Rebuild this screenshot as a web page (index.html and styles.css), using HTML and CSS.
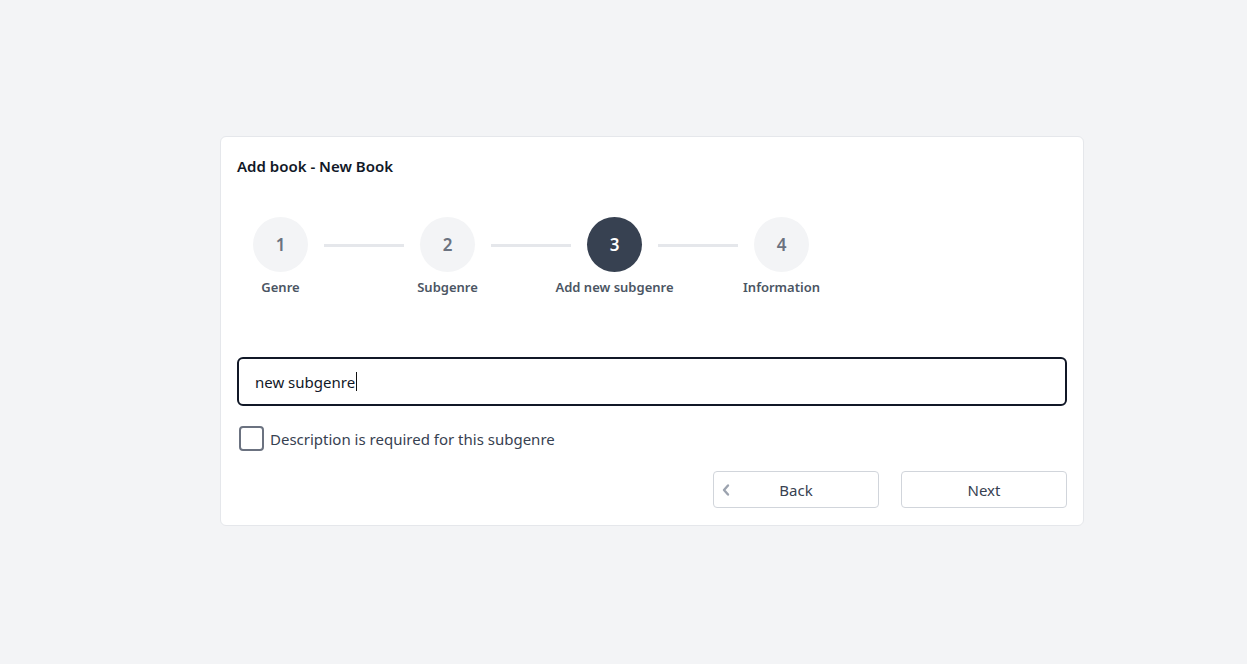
FILE: index.html
```html
<!DOCTYPE html>
<html lang="en">
<head>
<meta charset="utf-8">
<title>Add book - New Book</title>
<link rel="stylesheet" href="styles.css">
</head>
<body>
<main class="page">
  <section class="card">
    <h1 class="title">Add book - New Book</h1>
    <ol class="stepper">
      <li class="step"><span class="circle">1</span><span class="label">Genre</span></li>
      <li class="connector"></li>
      <li class="step"><span class="circle">2</span><span class="label">Subgenre</span></li>
      <li class="connector"></li>
      <li class="step active"><span class="circle">3</span><span class="label">Add new subgenre</span></li>
      <li class="connector"></li>
      <li class="step"><span class="circle">4</span><span class="label">Information</span></li>
    </ol>
    <div class="field"><span class="field-text">new subgenre</span><span class="caret"></span></div>
    <label class="check">
      <span class="box"></span>
      <span class="check-text">Description is required for this subgenre</span>
    </label>
    <div class="actions">
      <button class="btn back" type="button">
        <svg class="chev" width="10" height="14" viewBox="0 0 10 14"><path d="M7 2.5 L3 7 L7 11.5" fill="none" stroke="#9ca3af" stroke-width="2.4" stroke-linecap="round" stroke-linejoin="round"/></svg>
        <span>Back</span>
      </button>
      <button class="btn" type="button"><span>Next</span></button>
    </div>
  </section>
</main>
</body>
</html>
```
FILE: styles.css
```css
* { box-sizing: border-box; }
html, body { margin: 0; padding: 0; }
body {
  background: #f3f4f6;
  font-family: "Noto Sans", "Open Sans", sans-serif;
  color: #111827;
  width: 1247px;
  height: 664px;
}
.page {
  display: flex;
  justify-content: flex-start;
  padding: 136px 0 0 220px;
}
.card {
  width: 864px;
  background: #fff;
  border: 1px solid #e5e7eb;
  border-radius: 6px;
  padding: 15px 16px 17px 16px;
}
.title {
  margin: 0;
  font-size: 15px;
  font-weight: 600;
  line-height: 28px;
  color: #111827;
}
.stepper {
  list-style: none;
  margin: 37px 0 0;
  padding: 0 0 0 16px;
  display: flex;
  align-items: flex-start;
  height: 140px;
}
.step {
  width: 55px;
  display: flex;
  flex-direction: column;
  align-items: center;
}
.circle {
  width: 55px;
  height: 55px;
  border-radius: 50%;
  background: #f3f4f6;
  color: #6b7280;
  font-size: 17px;
  font-weight: 600;
  display: flex;
  align-items: center;
  justify-content: center;
}
.step.active .circle {
  background: #374151;
  color: #fff;
}
.label {
  white-space: nowrap;
  margin-top: 6px;
  font-size: 13px;
  font-weight: 600;
  color: #4b5563;
  line-height: 18px;
}
.connector {
  width: 80px;
  height: 3px;
  background: #e5e7eb;
  margin: 27px 16px 0;
}
.field {
  height: 49px;
  border: 2px solid #111827;
  border-radius: 6px;
  display: flex;
  align-items: center;
  padding: 0 16px;
  font-size: 15px;
  color: #111827;
}
.caret {
  display: inline-block;
  width: 1px;
  height: 19px;
  background: #111;
  margin-left: 1px;
}
.check {
  display: flex;
  align-items: center;
  margin-top: 20px;
  padding-left: 2px;
  gap: 6px;
  height: 25px;
}
.box {
  width: 25px;
  height: 25px;
  border: 2px solid #6b7280;
  border-radius: 4px;
  background: #fff;
}
.check-text {
  font-size: 15px;
  color: #374151;
}
.actions {
  display: flex;
  justify-content: flex-end;
  gap: 22px;
  margin-top: 20px;
}
.btn {
  position: relative;
  width: 166px;
  height: 37px;
  border: 1px solid #d1d5db;
  border-radius: 4px;
  background: #fff;
  font-family: inherit;
  font-size: 15px;
  color: #374151;
  display: flex;
  align-items: center;
  justify-content: center;
  padding: 0;
}
.chev {
  position: absolute;
  left: 7px;
  top: 11px;
}
```
